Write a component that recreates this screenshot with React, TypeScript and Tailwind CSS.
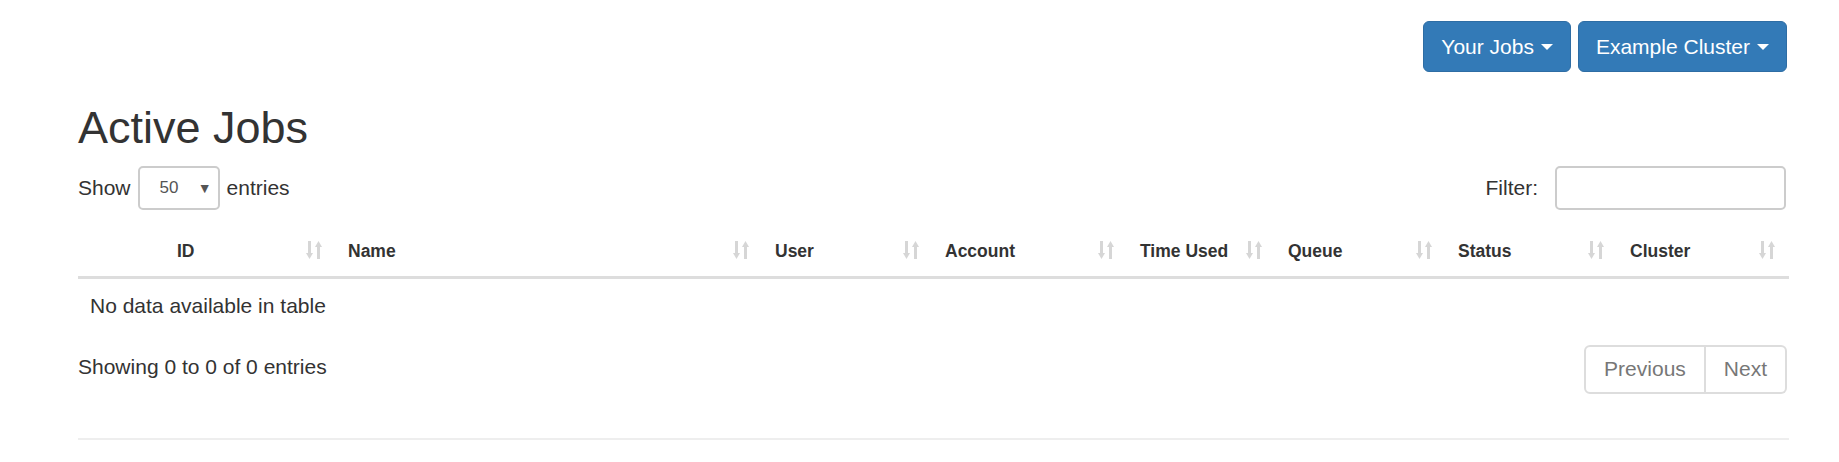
import React from "react";

const columns = [
  { label: "", width: 87, sortable: false },
  { label: "ID", width: 171, sortable: true },
  { label: "Name", width: 427, sortable: true },
  { label: "User", width: 170, sortable: true },
  { label: "Account", width: 195, sortable: true },
  { label: "Time Used", width: 148, sortable: true },
  { label: "Queue", width: 170, sortable: true },
  { label: "Status", width: 172, sortable: true },
  { label: "Cluster", width: 171, sortable: true },
];

const SortIcon = () => (
  <svg width="18" height="19" viewBox="0 0 18 19" className="shrink-0">
    <g fill="#d6d6d6">
      <rect x="2" y="0" width="3" height="13" />
      <polygon points="0,12 7,12 3.5,18" />
      <rect x="11" y="5" width="3" height="13" />
      <polygon points="9,6 16,6 12.5,0" />
    </g>
  </svg>
);

const Caret = () => (
  <span className="inline-block w-0 h-0 ml-[7px] border-x-[6px] border-x-transparent border-t-[6px] border-t-white align-middle" />
);

const ActiveJobsPage = () => {
  return (
    <div className="min-h-screen bg-white pl-[78px] pr-[50px] text-[#333333] text-[21px] leading-[30px] font-['Liberation_Sans',Arial,sans-serif]">
      <div className="flex justify-end gap-[7px] pt-[21px] pr-[2px]">
        <button className="h-[51px] px-[17px] bg-[#337ab7] border border-[#2e6da4] rounded-[6px] text-white text-[21px] flex items-center">
          Your Jobs
          <Caret />
        </button>
        <button className="h-[51px] px-[17px] bg-[#337ab7] border border-[#2e6da4] rounded-[6px] text-white text-[21px] flex items-center">
          Example Cluster
          <Caret />
        </button>
      </div>

      <h2 className="mt-[31px] mb-[13px] text-[45px] leading-[49.5px] font-normal">Active Jobs</h2>

      <div className="flex items-center justify-between h-[44px]">
        <div className="flex items-center gap-[7px]">
          <span>Show</span>
          <div className="w-[82px] h-[44px] border-2 border-[#cccccc] rounded-[5px] flex items-center justify-between pl-[20px] pr-[6px] text-[17px] text-[#555555]">
            <span>50</span>
            <span className="text-[14px] text-[#555555]">▼</span>
          </div>
          <span>entries</span>
        </div>
        <div className="flex items-center gap-[17px] pr-[3px]">
          <span>Filter:</span>
          <input
            type="text"
            className="w-[231px] h-[44px] border-2 border-[#cccccc] rounded-[5px] outline-none px-[15px]"
          />
        </div>
      </div>

      <table className="w-full table-fixed border-collapse mt-[12px]">
        <colgroup>
          {columns.map((c, i) => (
            <col key={i} style={{ width: c.width }} />
          ))}
        </colgroup>
        <thead>
          <tr className="border-b-[3px] border-[#dddddd]">
            {columns.map((c, i) => (
              <th key={i} className="px-[12px] pt-[14px] pb-[10px] text-left font-bold text-[17.5px] leading-[30px]">
                <div className="flex items-center justify-between gap-[4px]">
                  <span className="whitespace-nowrap">{c.label}</span>
                  {c.sortable && <SortIcon />}
                </div>
              </th>
            ))}
          </tr>
        </thead>
        <tbody>
          <tr>
            <td colSpan={9} className="px-[12px] py-[12px]">
              No data available in table
            </td>
          </tr>
        </tbody>
      </table>

      <div className="flex justify-between items-start mt-[7px]">
        <div className="pt-[12px]">Showing 0 to 0 of 0 entries</div>
        <div className="flex mt-[5px] mr-[2px] h-[49px] text-[#777777]">
          <span className="flex items-center px-[18px] border-2 border-[#dddddd] rounded-l-[6px]">Previous</span>
          <span className="flex items-center px-[18px] border-2 border-l-0 border-[#dddddd] rounded-r-[6px]">Next</span>
        </div>
      </div>

      <div className="mt-[44px] border-t-2 border-[#eeeeee]" />
    </div>
  );
};

export default ActiveJobsPage;
